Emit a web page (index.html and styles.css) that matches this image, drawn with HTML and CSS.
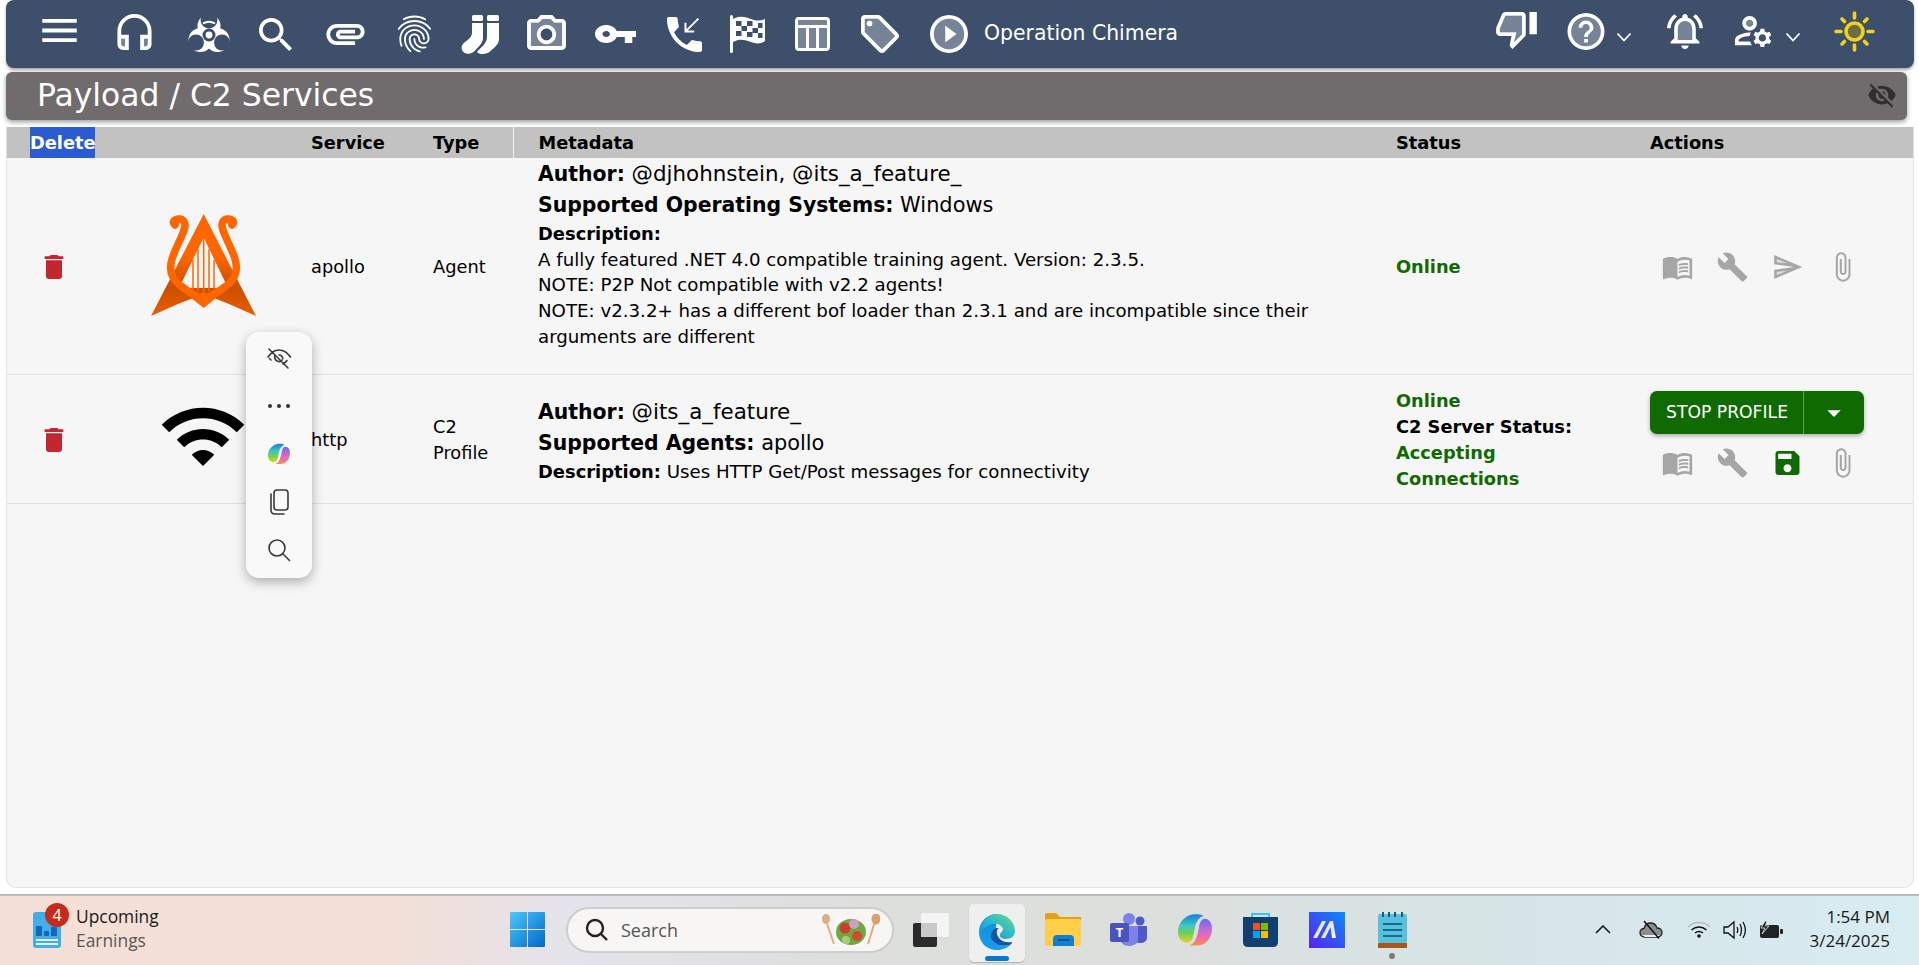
FILE: index.html
```html
<!DOCTYPE html>
<html lang="en">
<head>
<meta charset="utf-8">
<title>Payload / C2 Services</title>
<link rel="stylesheet" href="styles.css">
</head>
<body>
<header class="topbar">
  <svg class="ic up4 m0" width="35" height="23" viewBox="3 6 18 12"><path d="M3 18h18v-2H3v2zm0-5h18v-2H3v2zm0-7v2h18V6H3z"/></svg>
  <svg class="ic up2 m40" width="35" height="36" viewBox="3 1 18 19"><path opacity=".3" d="M5 14h2v4H5zM17 14h2v4h-2z"/><path d="M19 14v3c0 .55-.45 1-1 1h-1v-4h2M7 14v4H6c-.55 0-1-.45-1-1v-3h2m5-13c-4.97 0-9 4.03-9 9v7c0 1.66 1.34 3 3 3h3v-8H5v-2c0-3.87 3.13-7 7-7s7 3.13 7 7v2h-4v8h3c1.66 0 3-1.34 3-3v-7c0-4.97-4.03-9-9-9z"/></svg>
  <svg class="ic m35" width="43" height="39" viewBox="0 0 43 39"><defs><mask id="bio"><rect width="43" height="39" fill="#000"/><circle cx="22" cy="11" r="11.500" fill="#fff"/><circle cx="13.500" cy="25" r="12" fill="#fff"/><circle cx="30.500" cy="25" r="12" fill="#fff"/><circle cx="22" cy="5" r="8.500" fill="#000"/><circle cx="9" cy="27.500" r="8" fill="#000"/><circle cx="35" cy="27.500" r="8" fill="#000"/><circle cx="22" cy="20" r="6.500" fill="#000"/></mask></defs><rect width="43" height="39" mask="url(#bio)"/><circle cx="22" cy="20" r="3.400"/><path d="M16 8.500Q22 5 28 8.500" class="bio-arc"/></svg>
  <svg class="ic m29" width="33" height="33" viewBox="3 3 17.5 17.5"><path d="M15.5 14h-.79l-.28-.27C15.41 12.59 16 11.11 16 9.5 16 5.91 13.09 3 9.5 3S3 5.91 3 9.5 5.91 16 9.5 16c1.61 0 3.09-.59 4.23-1.57l.27.28v.79l5 4.99L20.49 19l-4.99-5zm-6 0C7.01 14 5 11.99 5 9.5S7.01 5 9.5 5 14 7.01 14 9.5 11.99 14 9.5 14z"/></svg>
  <svg class="ic m34" width="39" height="21" viewBox="2 7 20 11"><path d="M2 12.5C2 9.46 4.46 7 7.5 7H18c2.21 0 4 1.79 4 4s-1.79 4-4 4H9.5C8.12 15 7 13.88 7 12.5S8.12 10 9.5 10H17v2H9.41c-.55 0-.55 1 0 1H18c1.1 0 2-.9 2-2s-.9-2-2-2H7.5C5.57 9 4 10.57 4 12.5S5.57 16 7.5 16H17v2H7.5C4.46 18 2 15.54 2 12.5z"/></svg>
  <svg class="ic m32" width="34" height="38" viewBox="2.5 2 18.5 20"><path d="M17.81 4.47c-.08 0-.16-.02-.23-.06C15.66 3.42 14 3 12.01 3c-1.98 0-3.86.47-5.57 1.41-.24.13-.54.04-.68-.2-.13-.24-.04-.55.2-.68C7.82 2.52 9.86 2 12.01 2c2.13 0 3.99.47 6.03 1.52.25.13.34.43.21.67-.09.18-.26.28-.44.28zM3.5 9.72c-.1 0-.2-.03-.29-.09-.23-.16-.28-.47-.12-.7.99-1.4 2.25-2.5 3.75-3.27C9.98 4.04 14 4.03 17.15 5.65c1.5.77 2.76 1.86 3.75 3.25.16.22.11.54-.12.7-.23.16-.54.11-.7-.12-.9-1.26-2.04-2.25-3.39-2.94-2.87-1.47-6.54-1.47-9.4.01-1.36.7-2.5 1.7-3.4 2.96-.08.14-.23.21-.39.21zm6.25 12.07c-.13 0-.26-.05-.35-.15-.87-.87-1.34-1.43-2.01-2.64-.69-1.23-1.05-2.73-1.05-4.34 0-2.97 2.54-5.39 5.66-5.39s5.66 2.42 5.66 5.39c0 .28-.22.5-.5.5s-.5-.22-.5-.5c0-2.42-2.09-4.39-4.66-4.39s-4.66 1.97-4.66 4.39c0 1.44.32 2.77.93 3.85.64 1.15 1.08 1.64 1.85 2.42.19.2.19.51 0 .71-.11.1-.24.15-.37.15zm7.17-1.85c-1.19 0-2.24-.3-3.1-.89-1.49-1.01-2.38-2.65-2.38-4.39 0-.28.22-.5.5-.5s.5.22.5.5c0 1.41.72 2.74 1.94 3.56.71.48 1.54.71 2.54.71.24 0 .64-.03 1.04-.1.27-.05.53.13.58.41.05.27-.13.53-.41.58-.57.11-1.07.12-1.21.12zM14.91 22c-.04 0-.09-.01-.13-.02-1.59-.44-2.63-1.03-3.72-2.1-1.4-1.39-2.17-3.24-2.17-5.22 0-1.62 1.38-2.94 3.08-2.94s3.08 1.32 3.08 2.94c0 1.07.93 1.94 2.08 1.94s2.08-.87 2.08-1.94c0-3.77-3.25-6.83-7.25-6.83-2.84 0-5.44 1.58-6.61 4.03-.39.81-.59 1.76-.59 2.8 0 .78.07 2.01.67 3.61.1.26-.03.55-.29.64-.26.1-.55-.04-.64-.29-.49-1.31-.73-2.61-.73-3.96 0-1.2.23-2.29.68-3.24 1.33-2.79 4.28-4.6 7.51-4.6 4.55 0 8.25 3.51 8.25 7.83 0 1.62-1.38 2.94-3.08 2.94s-3.08-1.32-3.08-2.94c0-1.07-.93-1.94-2.08-1.94s-2.08.87-2.08 1.94c0 1.71.66 3.31 1.87 4.51.95.94 1.86 1.46 3.27 1.85.27.07.42.35.35.61-.05.23-.26.38-.47.38z"/></svg>
  <svg class="ic m30" width="39" height="39" viewBox="0 0 39 39"><rect x="11" y="0" width="11" height="6" rx="1.5"/><rect x="26" y="0" width="12" height="6" rx="1.5"/><path d="M11 8H22V23C22 28 18 31 15 34.500C11 40 3 40 1 35C-.5 30 3 28 6 25.500C9 23 11 21 11 18Z"/><path d="M26 8H38V24C38 29 34 32 30 35.500C26 40 18 40 16 37C19 33 26 29 26 22Z"/></svg>
  <svg class="ic up2 m27" width="39" height="35" viewBox="2 2 20 18"><path opacity=".3" d="M20 6h-4.050l-1.830-2H9.880L8.050 6H4v12h16V6zm-8 11c-2.760 0-5-2.240-5-5s2.240-5 5-5 5 2.240 5 5-2.240 5-5 5z"/><path d="M14.120 4l1.830 2H20v12H4V6h4.050l1.830-2h4.240M15 2H9L7.170 4H4c-1.100 0-2 .9-2 2v12c0 1.100.9 2 2 2h16c1.100 0 2-.9 2-2V6c0-1.100-.9-2-2-2h-3.170L15 2zm-3 7c1.650 0 3 1.350 3 3s-1.350 3-3 3-3-1.350-3-3 1.350-3 3-3m0-2c-2.760 0-5 2.240-5 5s2.240 5 5 5 5-2.240 5-5-2.240-5-5-5z"/></svg>
  <svg class="ic m29" width="41" height="18" viewBox="1 6 22 12" preserveAspectRatio="none"><path d="M12.650 10C11.830 7.670 9.610 6 7 6c-3.310 0-6 2.690-6 6s2.690 6 6 6c2.610 0 4.830-1.670 5.650-4H17v4h4v-4h2v-4H12.650zM7 14c-1.100 0-2-.9-2-2s.9-2 2-2 2 .9 2 2-.9 2-2 2z"/></svg>
  <svg class="ic m31" width="35" height="35" viewBox="3 3 18 18"><path d="M20 15.500c-1.250 0-2.450-.2-3.570-.57-.35-.11-.74-.03-1.020.24l-2.200 2.200c-2.830-1.440-5.150-3.750-6.590-6.590l2.200-2.210c.28-.26.36-.65.25-1C8.700 6.450 8.500 5.250 8.500 4c0-.55-.45-1-1-1H4c-.55 0-1 .45-1 1 0 9.390 7.610 17 17 17 .55 0 1-.45 1-1v-3.500c0-.55-.45-1-1-1zM19.500 4.200L18.800 3.500 13 9.300V6h-1v5h5v-1h-3.300z"/></svg>
  <svg class="ic m28" width="35" height="38" viewBox="0 0 35 38"><defs><clipPath id="flagclip"><path d="M3 4C10 0 16 2 21 4C26 6 31 6 35 4V26C31 29 26 29 21 27C16 25 10 23 3 27Z"/></clipPath></defs><rect width="3" height="38" rx="1.500"/><path d="M3 4C10 0 16 2 21 4C26 6 31 6 35 4V26C31 29 26 29 21 27C16 25 10 23 3 27Z"/><g clip-path="url(#flagclip)" class="check"><rect x="6" y="6" width="5.500" height="5"/><rect x="17" y="6" width="5.500" height="5"/><rect x="28" y="8" width="4.500" height="5"/><rect x="11.500" y="11" width="5.500" height="5"/><rect x="22.500" y="13" width="5.500" height="5"/><rect x="6" y="16" width="5.500" height="5"/><rect x="17" y="17" width="5.500" height="5"/><rect x="28" y="18" width="4.500" height="5"/></g></svg>
  <svg class="ic m30" width="35" height="34" viewBox="0 0 35 34"><rect x="1.500" y="1.500" width="32" height="31" rx="2.500" class="tone"/><rect x="1.500" y="1.500" width="32" height="31" rx="2.500" class="line"/><path d="M2 9.500H33M12.500 9.500V32M22.500 9.500V32" class="line"/></svg>
  <svg class="ic m31" width="38" height="38" viewBox="2 2 20 20"><path opacity=".3" d="M11 4H4v7l9 9.010L20 13l-9-9zM6.500 8C5.670 8 5 7.330 5 6.500S5.670 5 6.500 5 8 5.670 8 6.500 7.330 8 6.500 8z"/><path d="M21.410 11.580l-9-9C12.050 2.220 11.550 2 11 2H4c-1.100 0-2 .9-2 2v7c0 .55.22 1.050.59 1.420l9 9c.36.36.86.58 1.410.58s1.050-.22 1.410-.59l7-7c.37-.36.59-.86.59-1.410s-.23-1.060-.59-1.420zM13 20.010L4 11V4h7v-.01l9 9-7 7.020z"/><circle cx="6.500" cy="6.500" r="1.500"/></svg>
  <svg class="ic m31" width="38" height="38" viewBox="2 2 20 20"><path opacity=".3" d="M12 20c4.410 0 8-3.590 8-8s-3.590-8-8-8-8 3.590-8 8 3.590 8 8 8zM10 7.500l6 4.500-6 4.500v-9z"/><path d="M12 22c5.520 0 10-4.480 10-10S17.520 2 12 2 2 6.480 2 12s4.480 10 10 10zm0-18c4.410 0 8 3.590 8 8s-3.590 8-8 8-8-3.590-8-8 3.590-8 8-8zm-2 3.500v9l6-4.500z"/></svg>
  <span class="op-name">Operation Chimera</span>
  <svg class="ic up4 right-start" width="41" height="37" viewBox="1 3 22 20"><path opacity=".3" d="M3 12v2h9l-1.340 5.340L15 15V5H6z"/><path d="M15 3H6c-.83 0-1.540.5-1.840 1.220l-3.020 7.050c-.09.23-.14.47-.14.730v2c0 1.100.9 2 2 2h6.310l-.95 4.570-.03.32c0 .41.17.79.44 1.060L9.830 23l6.590-6.590c.36-.36.58-.86.58-1.410V5c0-1.100-.9-2-2-2zm0 12l-4.340 4.340L12 14H3v-2l3-7h9v10zm4-12h4v12h-4z"/></svg>
  <svg class="ic up6 m30" width="38" height="37" viewBox="2 2 20 20"><circle cx="12" cy="12" r="8" opacity=".3"/><path d="M11 18h2v-2h-2v2zm1-16C6.480 2 2 6.480 2 12s4.480 10 10 10 10-4.480 10-10S17.520 2 12 2zm0 18c-4.410 0-8-3.590-8-8s3.590-8 8-8 8 3.590 8 8-3.590 8-8 8zm0-14c-2.210 0-4 1.790-4 4h2c0-1.100.9-2 2-2s2 .9 2 2c0 2-3 1.750-3 5h2c0-2.250 3-2.500 3-5 0-2.210-1.790-4-4-4z"/></svg>
  <svg class="chev m11" width="16" height="10" viewBox="0 0 16 10"><path d="M1.500 1.500L8 8.500l6.500-7"/></svg>
  <svg class="ic up6 m34" width="38" height="36" viewBox="2 2 20 20"><path opacity=".3" d="M12 6.500c-2.490 0-4 2.020-4 4.500v6h8v-6c0-2.480-1.510-4.500-4-4.500z"/><path d="M12 22c1.100 0 2-.9 2-2h-4c0 1.100.9 2 2 2zm6-6v-5c0-3.070-1.630-5.640-4.500-6.320V4c0-.83-.67-1.500-1.500-1.500s-1.500.67-1.500 1.500v.68C7.640 5.360 6 7.920 6 11v5l-2 2v1h16v-1l-2-2zm-2 1H8v-6c0-2.480 1.510-4.500 4-4.500s4 2.020 4 4.500v6zM7.580 4.080L6.150 2.650C3.750 4.480 2.170 7.300 2.030 10.500h2c.15-2.650 1.510-4.970 3.550-6.420zm12.390 6.420h2c-.15-3.200-1.730-6.020-4.120-7.850l-1.420 1.430c2.020 1.450 3.390 3.770 3.540 6.420z"/></svg>
  <svg class="ic up6 m31" width="38" height="33" viewBox="2 4 20.800 17"><circle cx="10" cy="8" r="3" opacity=".3"/><path d="M4 18v-.65c0-.34.16-.66.41-.81C6.100 15.530 8.030 15 10 15c.03 0 .05 0 .08.01.1-.7.3-1.370.59-1.980-.22-.02-.44-.03-.67-.03-2.420 0-4.680.67-6.610 1.820-.88.52-1.390 1.500-1.390 2.530V20h9.260c-.42-.6-.75-1.280-.97-2H4z"/><path d="M10 12c2.210 0 4-1.790 4-4s-1.790-4-4-4-4 1.790-4 4 1.790 4 4 4zm0-6c1.100 0 2 .9 2 2s-.9 2-2 2-2-.9-2-2 .9-2 2-2z"/><path d="M20.750 16c0-.22-.03-.42-.06-.63l1.140-1.010-1-1.730-1.450.49c-.32-.27-.68-.48-1.080-.63L18 11h-2l-.3 1.490c-.4.15-.76.36-1.080.63l-1.450-.49-1 1.730 1.140 1.010c-.03.21-.06.41-.06.63s.03.42.06.63l-1.140 1.010 1 1.730 1.450-.49c.32.27.68.48 1.080.63L16 21h2l.3-1.490c.4-.15.76-.36 1.080-.63l1.450.49 1-1.730-1.140-1.010c.03-.21.06-.41.06-.63zM17 18c-1.100 0-2-.9-2-2s.9-2 2-2 2 .9 2 2-.9 2-2 2z"/></svg>
  <svg class="chev m12" width="16" height="10" viewBox="0 0 16 10"><path d="M1.500 1.500L8 8.500l6.500-7"/></svg>
  <svg class="sun up6 m33" width="41" height="41" viewBox="0 0 41 41"><circle cx="20.500" cy="20.500" r="8.500" class="sun-core"/><path d="M20.500 2v5M20.500 34v5M2 20.500h5M34 20.500h5M8 8l2.500 2.500M30.500 30.500L33 33M33 8l-2.500 2.500M10.500 30.500L8 33" class="sun-rays"/></svg>
</header>

<section class="titlebar">
  <h1 class="page-title">Payload / C2 Services</h1>
  <svg class="eye-off" width="30" height="30" viewBox="0 0 24 24"><path d="M12 7c2.760 0 5 2.240 5 5 0 .65-.13 1.260-.36 1.830l2.920 2.920c1.510-1.260 2.700-2.890 3.430-4.750-1.730-4.390-6-7.500-11-7.500-1.400 0-2.740.25-3.980.7l2.160 2.160C10.740 7.130 11.350 7 12 7zM2 4.270l2.280 2.280.46.46C3.080 8.300 1.780 10.020 1 12c1.730 4.390 6 7.500 11 7.500 1.550 0 3.030-.3 4.380-.84l.42.42L19.730 22 21 20.730 3.270 3 2 4.270zM7.530 9.800l1.550 1.550c-.05.21-.08.43-.08.65 0 1.660 1.340 3 3 3 .22 0 .44-.03.65-.08l1.550 1.550c-.67.33-1.410.53-2.200.53-2.760 0-5-2.240-5-5 0-.79.2-1.530.53-2.200zm4.310-.78l3.150 3.150.02-.16c0-1.660-1.340-3-3-3l-.17.01z"/></svg>
</section>

<main class="panel">
  <table class="services">
    <colgroup>
      <col class="c-del"><col class="c-logo"><col class="c-svc"><col class="c-type"><col class="c-meta"><col class="c-status"><col class="c-act">
    </colgroup>
    <thead>
      <tr>
        <th class="th-del"><span class="selected">Delete</span></th>
        <th></th>
        <th>Service</th>
        <th class="th-type">Type</th>
        <th class="th-meta">Metadata</th>
        <th>Status</th>
        <th>Actions</th>
      </tr>
    </thead>
    <tbody>
      <tr class="row-agent">
        <td class="td-del"><svg class="trash" width="32" height="32" viewBox="0 0 24 24"><path d="M6 19c0 1.100.9 2 2 2h8c1.100 0 2-.9 2-2V7H6v12zM19 4h-3.500l-1-1h-5l-1 1H5v2h14V4z"/></svg></td>
        <td class="td-logo">
          <svg class="logo" width="105" height="103" viewBox="0 0 105 103">
            <defs><linearGradient id="lyreg" x1="0" y1="0" x2="0" y2="1"><stop offset=".4" stop-color="#ff6600"/><stop offset=".72" stop-color="#c94f00"/><stop offset="1" stop-color="#ea5e00"/></linearGradient></defs>
            <path fill="url(#lyreg)" fill-rule="evenodd" d="M52.700 0L105 102 78 90 52.700 80 27 90 0 102ZM52.700 23.500L28 74H77Z"/>
            <path d="M42 46V75M47 35V77M52.700 23.500V79M58 35V77M63 46V75" class="strings"/>
            <path d="M24 11C20 8 24 4.500 29 5C34 6 35 11 33 16C31 23 24 35 21 45C18 55 20 65 30 72C36 77 45 82 52.700 86C60 82 69 77 75 72C85 65 87 55 84 45C81 35 74 23 72 16C70 11 71 6 76 5C81 4.500 85 8 81 11" class="lyre"/>
            <path d="M40 84L52.700 94 65 84 52.700 78Z" class="lyre-tip"/>
            <circle cx="24.500" cy="7.500" r="4.600" class="lyre-tip"/><circle cx="80.500" cy="7.500" r="4.600" class="lyre-tip"/>
          </svg>
        </td>
        <td>apollo</td>
        <td>Agent</td>
        <td class="td-meta">
          <div class="meta-lg meta-author"><b>Author:</b> @djhohnstein, @its_a_feature_</div>
          <div class="meta-lg"><b>Supported Operating Systems:</b> Windows</div>
          <div class="meta-sm"><b>Description:</b></div>
          <div class="meta-sm">A fully featured .NET 4.0 compatible training agent. Version: 2.3.5.</div>
          <div class="meta-sm">NOTE: P2P Not compatible with v2.2 agents!</div>
          <div class="meta-sm">NOTE: v2.3.2+ has a different bof loader than 2.3.1 and are incompatible since their arguments are different</div>
        </td>
        <td><b class="ok">Online</b></td>
        <td>
          <div class="actions">
            <svg class="act" width="32" height="32" viewBox="0 0 24 24"><path d="M21 5c-1.110-.35-2.330-.5-3.500-.5-1.950 0-4.050.4-5.500 1.500-1.450-1.100-3.550-1.500-5.500-1.500S2.450 4.900 1 6v14.650c0 .25.25.5.5.5.1 0 .15-.05.25-.05C3.100 20.450 5.050 20 6.500 20c1.950 0 4.050.4 5.500 1.500 1.350-.85 3.800-1.500 5.500-1.500 1.650 0 3.350.3 4.750 1.050.1.05.15.05.25.05.25 0 .5-.25.5-.5V6c-.6-.45-1.250-.75-2-1zm0 13.500c-1.100-.35-2.300-.5-3.500-.5-1.700 0-4.150.65-5.500 1.500V8c1.350-.85 3.800-1.500 5.500-1.500 1.200 0 2.400.15 3.500.5v11.500z"/><path d="M17.500 10.500c.88 0 1.730.09 2.500.26V9.240c-.79-.15-1.640-.24-2.500-.24-1.700 0-3.240.29-4.500.83v1.660c1.130-.64 2.700-.99 4.500-.99zM13 12.490v1.660c1.130-.64 2.700-.99 4.500-.99.88 0 1.730.09 2.500.26V11.900c-.79-.15-1.640-.24-2.500-.24-1.700 0-3.240.3-4.500.83zM17.500 14.330c-1.700 0-3.240.29-4.500.83v1.660c1.130-.64 2.700-.99 4.500-.99.88 0 1.730.09 2.500.26v-1.520c-.79-.16-1.640-.24-2.500-.24z"/></svg>
            <svg class="act" width="32" height="32" viewBox="0 0 24 24"><path d="M22.700 19l-9.100-9.100c.9-2.300.4-5-1.500-6.900-2-2-5-2.400-7.400-1.300L9 6 6 9 1.600 4.700C.4 7.100.9 10.100 2.900 12.100c1.900 1.900 4.600 2.400 6.900 1.500l9.100 9.100c.4.4 1 .4 1.400 0l2.300-2.300c.5-.4.5-1.100.1-1.400z"/></svg>
            <svg class="act" width="32" height="32" viewBox="0 0 24 24"><path opacity=".3" d="M4 8.250l7.510 1-7.500-3.220zm.01 9.720l7.500-3.220-7.510 1z"/><path d="M2.010 3L2 10l15 2-15 2 .01 7L23 12 2.010 3zM4 8.250V6.030l7.510 3.220-7.510-1zm.01 9.720v-2.220l7.510-1-7.510 3.220z"/></svg>
            <svg class="act" width="32" height="32" viewBox="0 0 24 24"><path d="M16.500 6v11.500c0 2.210-1.790 4-4 4s-4-1.790-4-4V5c0-1.380 1.120-2.500 2.500-2.500s2.500 1.120 2.500 2.500v10.500c0 .55-.45 1-1 1s-1-.45-1-1V6H10v9.500c0 1.380 1.120 2.500 2.500 2.500s2.500-1.120 2.500-2.500V5c0-2.210-1.790-4-4-4S7 2.790 7 5v12.500c0 3.040 2.460 5.500 5.500 5.500s5.500-2.460 5.500-5.500V6h-1.500z"/></svg>
          </div>
        </td>
      </tr>
      <tr class="row-c2">
        <td class="td-del"><svg class="trash" width="32" height="32" viewBox="0 0 24 24"><path d="M6 19c0 1.100.9 2 2 2h8c1.100 0 2-.9 2-2V7H6v12zM19 4h-3.500l-1-1h-5l-1 1H5v2h14V4z"/></svg></td>
        <td class="td-logo"><svg class="logo wifi" width="90" height="90" viewBox="0 0 24 24"><path d="M1 9l2 2c4.970-4.970 13.030-4.970 18 0l2-2C16.930 2.930 7.080 2.930 1 9zm8 8l3 3 3-3c-1.650-1.660-4.340-1.660-6 0zm-4-4l2 2c2.760-2.760 7.240-2.760 10 0l2-2C15.140 9.140 8.870 9.140 5 13z"/></svg></td>
        <td>http</td>
        <td>C2 Profile</td>
        <td class="td-meta">
          <div class="meta-lg meta-author"><b>Author:</b> @its_a_feature_</div>
          <div class="meta-lg"><b>Supported Agents:</b> apollo</div>
          <div class="meta-sm"><b>Description:</b> Uses HTTP Get/Post messages for connectivity</div>
        </td>
        <td class="td-status">
          <b class="ok">Online</b><br><b>C2 Server Status:</b><br><b class="ok">Accepting Connections</b>
        </td>
        <td class="td-actions">
          <div class="btn-group"><span class="btn-main">STOP PROFILE</span><span class="btn-drop"><svg width="32" height="32" viewBox="0 0 24 24"><path d="M7 10l5 5 5-5z"/></svg></span></div>
          <div class="actions actions-under">
            <svg class="act" width="32" height="32" viewBox="0 0 24 24"><path d="M21 5c-1.110-.35-2.330-.5-3.500-.5-1.950 0-4.050.4-5.500 1.500-1.450-1.100-3.550-1.500-5.500-1.500S2.450 4.900 1 6v14.650c0 .25.25.5.5.5.1 0 .15-.05.25-.05C3.100 20.450 5.050 20 6.500 20c1.950 0 4.050.4 5.500 1.500 1.350-.85 3.800-1.500 5.500-1.500 1.650 0 3.350.3 4.750 1.050.1.05.15.05.25.05.25 0 .5-.25.5-.5V6c-.6-.45-1.250-.75-2-1zm0 13.500c-1.100-.35-2.300-.5-3.500-.5-1.700 0-4.150.65-5.500 1.500V8c1.350-.85 3.800-1.500 5.500-1.500 1.200 0 2.400.15 3.500.5v11.500z"/><path d="M17.500 10.500c.88 0 1.730.09 2.500.26V9.240c-.79-.15-1.640-.24-2.500-.24-1.700 0-3.240.29-4.500.83v1.660c1.130-.64 2.700-.99 4.500-.99zM13 12.490v1.660c1.130-.64 2.700-.99 4.500-.99.88 0 1.730.09 2.500.26V11.900c-.79-.15-1.640-.24-2.500-.24-1.700 0-3.240.3-4.500.83zM17.500 14.330c-1.700 0-3.240.29-4.500.83v1.660c1.130-.64 2.700-.99 4.500-.99.88 0 1.730.09 2.500.26v-1.520c-.79-.16-1.640-.24-2.500-.24z"/></svg>
            <svg class="act" width="32" height="32" viewBox="0 0 24 24"><path d="M22.700 19l-9.100-9.100c.9-2.300.4-5-1.500-6.900-2-2-5-2.400-7.400-1.300L9 6 6 9 1.600 4.700C.4 7.100.9 10.100 2.900 12.100c1.900 1.900 4.600 2.400 6.900 1.500l9.100 9.100c.4.4 1 .4 1.400 0l2.300-2.300c.5-.4.5-1.100.1-1.400z"/></svg>
            <svg class="act act-save" width="32" height="32" viewBox="0 0 24 24"><path d="M17 3H5c-1.110 0-2 .9-2 2v14c0 1.100.89 2 2 2h14c1.100 0 2-.9 2-2V7l-4-4zm-5 16c-1.660 0-3-1.340-3-3s1.340-3 3-3 3 1.340 3 3-1.340 3-3 3zm3-10H5V5h10v4z"/></svg>
            <svg class="act" width="32" height="32" viewBox="0 0 24 24"><path d="M16.500 6v11.500c0 2.210-1.790 4-4 4s-4-1.790-4-4V5c0-1.380 1.120-2.500 2.500-2.500s2.500 1.120 2.500 2.500v10.500c0 .55-.45 1-1 1s-1-.45-1-1V6H10v9.500c0 1.380 1.120 2.500 2.500 2.500s2.500-1.120 2.500-2.500V5c0-2.210-1.790-4-4-4S7 2.790 7 5v12.500c0 3.040 2.460 5.500 5.500 5.500s5.500-2.460 5.500-5.500V6h-1.500z"/></svg>
          </div>
        </td>
      </tr>
    </tbody>
  </table>
</main>

<aside class="mini-menu">
  <svg class="mini" width="26" height="24" viewBox="0 0 26 24"><path d="M2 11C6 5 10 4 13 4C17 4 21 6 24.500 11M5 14C4.500 13.500 4 13 3.500 12.500M21 14.500C20 16 18.500 17 17 18M9 9C8 11 9 14 11 15C13 16 15 15.500 16 14M13 9C15 9 17 11 16.700 12.500M3 3L22 22"/></svg>
  <div class="dots"><i></i><i></i><i></i></div>
  <svg width="24" height="22" viewBox="0 0 24 24"><defs><linearGradient id="mc1" x1="0" y1="0" x2="0" y2="1"><stop offset="0" stop-color="#1a7ce8"/><stop offset=".4" stop-color="#3cc8c0"/><stop offset=".7" stop-color="#7ad04a"/><stop offset="1" stop-color="#f0d030"/></linearGradient><linearGradient id="mc2" x1="0" y1="0" x2="0" y2="1"><stop offset="0" stop-color="#6a6cf0"/><stop offset=".45" stop-color="#c86ad8"/><stop offset=".75" stop-color="#f5709a"/><stop offset="1" stop-color="#ff9040"/></linearGradient></defs><path fill="url(#mc1)" d="M10 1C13 .5 17 1 18 2C15 3 13 6 12 10L10.500 17C10 20 8 21 6 21C3 21 0 18 0 13C0 7 5 2 10 1Z"/><path fill="url(#mc2)" d="M14 23H8C11 22 13 19 14 14L15 9C15.500 6 17 4 19 4C22 4 24 7 24 11C24 17 20 23 14 23Z"/></svg>
  <svg class="mini" width="20" height="26" viewBox="0 0 20 26"><rect x="5" y="1" width="14" height="20" rx="3"/><path d="M2 5V21C2 23.500 3.500 25 6 25H15"/></svg>
  <svg class="mini" width="24" height="24" viewBox="0 0 24 24"><circle cx="10" cy="10" r="8"/><path d="M16 16L22.500 22.500"/></svg>
</aside>

<footer class="taskbar">
  <div class="widget">
    <div class="widget-icon">
      <svg width="28" height="36" viewBox="0 0 28 36"><rect width="28" height="36" rx="3" fill="#41aeea"/><rect x="3" y="14" width="6" height="10" rx="1" fill="#1565b8"/><rect x="11" y="19" width="5" height="5" rx="1" fill="#1565b8"/><rect x="18" y="15" width="6" height="9" rx="1" fill="#1565b8"/><rect x="3" y="27" width="22" height="2" fill="#e8f6fd"/><rect x="3" y="31" width="22" height="2" fill="#e8f6fd"/></svg>
      <span class="badge">4</span>
    </div>
    <div class="widget-text"><div class="w1">Upcoming</div><div class="w2">Earnings</div></div>
  </div>
  <svg class="winlogo" width="35" height="35" viewBox="0 0 35 35"><defs><linearGradient id="win" x1="0" y1="0" x2="1" y2="1"><stop offset="0" stop-color="#4cc8fb"/><stop offset="1" stop-color="#0068c8"/></linearGradient></defs><path fill="url(#win)" d="M1 0H17V17H0V1Q0 0 1 0ZM18 0H34Q35 0 35 1V17H18ZM0 18H17V35H1Q0 35 0 34ZM18 18H35V34Q35 35 34 35H18Z"/></svg>
  <div class="search-pill">
    <svg class="pill-ic" width="24" height="24" viewBox="0 0 24 24"><circle cx="10" cy="10" r="8"/><path d="M16 16L22 22"/></svg>
    <span class="pill-text">Search</span>
    <svg class="salad" width="58" height="32" viewBox="0 0 58 32"><path d="M3 4L12 30" class="spoon"/><ellipse cx="4" cy="5" rx="4" ry="5" fill="#dcae84"/><path d="M54 4L46 30" class="spoon"/><ellipse cx="54" cy="5" rx="4.500" ry="5.500" fill="#d9a273"/><ellipse cx="29" cy="18" rx="15" ry="13" fill="#6fa83f"/><circle cx="23" cy="14" r="5.500" fill="#c94030"/><circle cx="35" cy="22" r="5" fill="#d04a30"/><circle cx="32" cy="10" r="5" fill="#c9a0c8"/><circle cx="24" cy="26" r="4" fill="#a8cc78"/></svg>
  </div>
  <svg class="tb taskview" width="36" height="34" viewBox="0 0 36 34"><rect x="0" y="10" width="24" height="24" rx="2" fill="#2b2b2b"/><rect x="8" y="0" width="28" height="24" rx="1.500" fill="#f4f4f4"/><rect x="8" y="10" width="16" height="14" fill="#c9c9c9"/></svg>
  <div class="tile">
    <svg width="36" height="36" viewBox="0 0 36 36"><defs><linearGradient id="edge1" x1="0" y1="0" x2="0" y2="1"><stop offset="0" stop-color="#0c8fd8"/><stop offset="1" stop-color="#1a9cf0"/></linearGradient><linearGradient id="edge2" x1="0" y1="1" x2="1" y2="0"><stop offset=".2" stop-color="#1e9ed8"/><stop offset=".6" stop-color="#35c1c1"/><stop offset="1" stop-color="#74dc72"/></linearGradient></defs><path fill="url(#edge1)" d="M18 0C8 0 0 8 0 18C0 29 8 36 18 36C24 36 29 33.500 32.500 30C27 32 21 33 16 29C11 25 12 17 17 14Z"/><path fill="url(#edge2)" d="M18 0C28 0 36 8 36 17C36 22 32 25 27 25C23 25 20 23 21 20C22 18 24 17 24 15C23 11 18 9 14 10C9 11 3 15 1 20C0 10 8 0 18 0Z"/><path fill="#0c56a4" d="M17 14C11 17 10 25 16 29C21 33 27 32 32.500 30L33 28C28 29 23 28 20 24C17 20 17 16 20 14Z"/></svg>
    <span class="tile-bar"></span>
  </div>
  <svg class="tb explorer" width="36" height="33" viewBox="0 0 36 33"><path fill="#e1a315" d="M0 2Q0 0 2 0H11L15 4H36V14H0Z"/><rect y="6" width="36" height="27" rx="2" fill="#ffcf49"/><path fill="#0f7fd0" d="M8 26Q8 22 12 22H25Q29 22 29 26V33H8Z"/><rect x="13" y="26" width="11" height="2" fill="#0a4f94"/></svg>
  <svg class="tb teams" width="37" height="33" viewBox="0 0 37 33"><circle cx="19" cy="6" r="6" fill="#7b83eb"/><circle cx="30" cy="8" r="4.500" fill="#5059c9"/><path fill="#5059c9" d="M23 13H37V24C37 28 34 30 30 30C27 30 24 29 23 27Z"/><path fill="#7b83eb" d="M10 13H28V26C28 31 23 33 19 33C14 33 10 30 10 25Z"/><rect y="10" width="19" height="19" rx="2" fill="#4b53bc"/><text x="9.500" y="24" class="teams-t">T</text></svg>
  <svg class="tb copilot" width="36" height="34" viewBox="0 0 24 24"><path fill="url(#mc1)" d="M10 1C13 .5 17 1 18 2C15 3 13 6 12 10L10.500 17C10 20 8 21 6 21C3 21 0 18 0 13C0 7 5 2 10 1Z"/><path fill="url(#mc2)" d="M14 23H8C11 22 13 19 14 14L15 9C15.500 6 17 4 19 4C22 4 24 7 24 11C24 17 20 23 14 23Z"/></svg>
  <svg class="tb store" width="35" height="35" viewBox="0 0 35 35"><path d="M9 6V2H26V6" fill="none" stroke="#36c5ee" stroke-width="2"/><path fill="#123f70" d="M0 5H35V30Q35 35 30 35H5Q0 35 0 30Z"/><rect x="10" y="11" width="7" height="7" fill="#f25022"/><rect x="18" y="11" width="7" height="7" fill="#7fba00"/><rect x="10" y="19" width="7" height="7" fill="#00a4ef"/><rect x="18" y="19" width="7" height="7" fill="#ffb900"/></svg>
  <svg class="tb mapp" width="36" height="36" viewBox="0 0 36 36"><defs><linearGradient id="mg" x1="0" y1="1" x2="1" y2="0"><stop offset="0" stop-color="#5a20f0"/><stop offset="1" stop-color="#0a8cf8"/></linearGradient></defs><rect width="36" height="36" fill="url(#mg)"/><path fill="#e8e8f8" d="M4 26L13 9H17L8 26ZM12 26L21 9H24L27 26H23L21.500 15 16 26Z"/><rect x="23" y="22" width="3" height="4" fill="#fff"/></svg>
  <div class="tb-note">
    <svg width="29" height="36" viewBox="0 0 29 36"><rect y="2" width="29" height="29" rx="2" fill="#58bfdc"/><rect x="4" y="0" width="2" height="5" fill="#0d5f7a"/><rect x="10" y="0" width="2" height="5" fill="#0d5f7a"/><rect x="16" y="0" width="2" height="5" fill="#0d5f7a"/><rect x="23" y="0" width="2" height="5" fill="#0d5f7a"/><rect x="5" y="11" width="19" height="2" fill="#0f6e8c"/><rect x="5" y="17" width="19" height="2" fill="#0f6e8c"/><rect x="5" y="23" width="19" height="2" fill="#0f6e8c"/><rect y="31" width="29" height="5" fill="#a8561b"/></svg>
    <span class="note-dot"></span>
  </div>
  <svg class="tb tray-chev" width="16" height="9" viewBox="0 0 16 9"><path d="M1 8L8 1l7 7"/></svg>
  <svg class="tb cloud" width="24" height="19" viewBox="0 0 24 19"><path d="M6 17C3 17 1 15 1 12.500C1 10 3 8.500 5 8.500C6 5 8.500 3 11.500 3C14.500 3 17 5 18 8C21 8 23 10 23 12.500C23 15 21 17 18 17Z" fill="#8d8d8d" stroke="#222" stroke-width="1.300"/><path d="M3 15L21 15 18 17H6Z" fill="#eee"/><path d="M5 1L20 18.500" stroke="#111" stroke-width="1.500"/></svg>
  <svg class="tb wifi-t" width="24" height="17" viewBox="0 0 24 17"><path d="M1 6C7 0 17 0 23 6" fill="none" stroke="#bbb" stroke-width="1.400"/><path d="M4.500 9C9 5 15 5 19.500 9M8 12C10.500 10 13.500 10 16 12" fill="none" stroke="#111" stroke-width="1.500"/><circle cx="12" cy="15" r="1.800" fill="#111"/></svg>
  <svg class="tb speaker" width="24" height="20" viewBox="0 0 24 20"><path d="M1 7H5L11 2V18L5 13H1Z" fill="none" stroke="#111" stroke-width="1.300"/><path d="M14 7C15 9 15 11 14 13M17 4C19 8 19 12 17 16M20 2C23 7 23 13 20 18" fill="none" stroke="#111" stroke-width="1.300"/></svg>
  <svg class="tb battery" width="24" height="18" viewBox="0 0 24 18"><rect x="1" y="4" width="19" height="13" rx="2" fill="#222"/><rect x="21" y="8" width="3" height="5" rx="1" fill="#222"/><path d="M6 0L2 7H6L3 13L10 5H6.500L8 0Z" fill="#222" stroke="#e8f2f4" stroke-width=".8"/></svg>
  <div class="clock"><div>1:54 PM</div><div>3/24/2025</div></div>
</footer>
</body>
</html>
```

FILE: styles.css
```css
* { box-sizing: border-box; }
html, body { margin: 0; height: 965px; overflow: hidden; }
body {
  position: relative;
  display: flex;
  flex-direction: column;
  width: 1919px;
  background: #fff;
  font-family: "DejaVu Sans", Verdana, sans-serif;
  color: #000;
}

/* top navigation */
.topbar {
  flex: none;
  height: 68px;
  margin: 0 5px 0 6px;
  padding: 0 39px 0 36px;
  display: flex;
  align-items: center;
  background: #3d4f6b;
  border-radius: 8px;
  box-shadow: 0 2px 3px rgba(0,0,0,.35);
}
.ic { flex: none; fill: #fff; }
.ic .tone { fill: #fff; fill-opacity: .3; }
.ic .line { fill: none; stroke: #fff; stroke-width: 3; }
.ic .check { fill: #3d4f6b; }
.ic .bio-arc { fill: none; stroke: #fff; stroke-width: 2; }
.up2 { margin-bottom: 4px; }
.up4 { margin-bottom: 7px; }
.up6 { margin-bottom: 6px; }
.m0 { margin-left: 0; }
.m11 { margin-left: 11px; }
.m12 { margin-left: 12px; }
.m27 { margin-left: 27px; }
.m28 { margin-left: 28px; }
.m29 { margin-left: 29px; }
.m30 { margin-left: 30px; }
.m31 { margin-left: 31px; }
.m32 { margin-left: 32px; }
.m33 { margin-left: 33px; }
.m34 { margin-left: 34px; }
.m35 { margin-left: 35px; }
.m40 { margin-left: 40px; }
.op-name {
  margin: 0 0 2px 16px;
  font-size: 20.4px;
  color: #fff;
  white-space: nowrap;
}
.right-start { margin-left: auto; }
.chev { flex: none; fill: none; stroke: #fff; stroke-width: 1.8; margin-top: 6px; }
.sun { flex: none; }
.sun-core { fill: #6d6d45; stroke: #f2d21a; stroke-width: 3.6; }
.sun-rays { fill: none; stroke: #f2d21a; stroke-width: 3.6; stroke-linecap: round; }

/* page title */
.titlebar {
  flex: none;
  height: 48px;
  margin: 4px 12px 0 6px;
  padding: 0 10px 2px 31px;
  display: flex;
  align-items: center;
  justify-content: space-between;
  background: #706b6c;
  border-radius: 6px;
  box-shadow: 0 2px 5px rgba(0,0,0,.4);
}
.page-title {
  margin: 0;
  font-size: 31.4px;
  font-weight: 400;
  color: #fff;
}
.eye-off { fill: #2f2f2f; }

/* services table */
.panel {
  flex: none;
  height: 761px;
  margin: 7px 5px 0 6px;
  background: #f6f6f6;
  border: 1px solid #e2e2e2;
  border-top: 0;
  border-radius: 0 0 10px 10px;
}
.services {
  width: 100%;
  table-layout: fixed;
  border-collapse: collapse;
  font-size: 17.8px;
  line-height: 26px;
}
.c-del { width: 98px; }
.c-logo { width: 196px; }
.c-svc { width: 122px; }
.c-type { width: 90px; }
.c-meta { width: 873px; }
.c-status { width: 254px; }
.c-act { width: 273px; }
.services th {
  height: 31px;
  padding: 0 0 0 10px;
  background: #c2c2c2;
  font-weight: 700;
  text-align: left;
}
.services .th-del { padding-left: 23px; }
.selected { display: block; width: 65px; height: 31px; line-height: 31px; background: #2a5bd0; color: #fff; }
.th-type { border-right: 1px solid #f0f0f0; }
.services .th-meta { padding-left: 25px; }
.services td {
  padding: 13px 0 11px 10px;
  vertical-align: middle;
  border-bottom: 1px solid #e0e0e0;
}
.services .td-del { padding: 2px 0 0 31px; }
.services .td-logo { padding: 0; text-align: center; }
.services .td-meta { padding: 4px 0 0 25px; }
.row-agent { height: 216px; }
.services .row-agent .td-meta { padding: 0 30px 24px 25px; }
.row-c2 { height: 128px; }
.services .td-status { padding-right: 30px; }
.services .td-actions { padding-bottom: 20px; }
.trash, .logo { display: block; }
.trash { fill: #c4262e; }
.logo { margin: 0 auto; }
.wifi { margin-top: -6px; }
.strings { fill: none; stroke: #ff6600; stroke-width: 1.5; }
.lyre { fill: none; stroke: #ff6600; stroke-width: 7.5; stroke-linecap: round; stroke-linejoin: round; }
.lyre-tip { fill: #ff6600; }
.meta-lg { font-size: 20.9px; line-height: 31px; }
.meta-author { font-size: 21.4px; }
.meta-lg b { font-size: 20.4px; }
.meta-sm { font-size: 18.2px; line-height: 25.7px; }
.meta-sm b { font-size: 17.9px; }
.ok { color: #0f6a02; }
.actions { display: flex; }
.act { flex: none; width: 55px; fill: #a6a6a6; }
.act-save { fill: #0f6a02; }
.actions-under { margin-top: 13px; }
.btn-group {
  display: flex;
  width: 214px;
  height: 43px;
  background: #0f6a02;
  border-radius: 7px;
  color: #fff;
  box-shadow: 0 2px 4px rgba(0,0,0,.3);
}
.btn-main {
  flex: 1;
  padding-left: 16px;
  line-height: 43px;
  font-size: 17.2px;
  border-right: 1px solid #5f9a56;
  white-space: nowrap;
}
.btn-drop { width: 60px; display: flex; align-items: center; justify-content: center; fill: #fff; }

/* selection mini menu */
.mini-menu {
  position: absolute;
  left: 246px;
  top: 332px;
  width: 66px;
  height: 246px;
  padding-top: 2px;
  display: grid;
  grid-auto-rows: 48px;
  place-items: center;
  background: #f9f9f9;
  border-radius: 13px;
  box-shadow: 0 4px 12px rgba(0,0,0,.3);
}
.mini { fill: none; stroke: #3a3a3a; stroke-width: 1.6; stroke-linecap: round; }
.dots { display: flex; gap: 5px; }
.dots i { width: 4px; height: 4px; border-radius: 50%; background: #333; }

/* taskbar */
.taskbar {
  flex: none;
  position: relative;
  height: 71px;
  margin-top: 6px;
  padding: 0 29px 2px 33px;
  display: flex;
  align-items: center;
  border-top: 2px solid #bdb9b9;
  background: linear-gradient(90deg, #f5e0d8 0%, #f3dfd6 20%, #e4e3ec 30%, #dcdfdc 45%, #dcdfdc 60%, #d6e5e8 80%, #d8ecf2 100%);
  font-family: "Open Sans", "Noto Sans", sans-serif;
}
.widget { width: 477px; display: flex; align-items: center; flex: none; }
.widget-icon { position: relative; width: 28px; height: 36px; }
.badge {
  position: absolute;
  left: 12px;
  top: -9px;
  width: 24px;
  height: 24px;
  border-radius: 50%;
  background: #c42b1c;
  color: #fff;
  font-size: 16px;
  line-height: 24px;
  text-align: center;
}
.widget-text { margin: 0 0 3px 15px; font-size: 17.4px; line-height: 24px; }
.w1 { color: #1a1a1a; }
.w2 { color: #5c5656; }
.winlogo { flex: none; }
.search-pill {
  flex: none;
  width: 328px;
  height: 46px;
  margin-left: 21px;
  padding: 0 12px 0 17px;
  display: flex;
  align-items: center;
  border: 2px solid #cfcdca;
  border-radius: 23px;
  background: #f7f6f4;
}
.pill-ic { fill: none; stroke: #222; stroke-width: 2.4; }
.pill-text { margin-left: 12px; font-size: 18px; color: #555; }
.salad { margin-left: auto; }
.spoon { stroke: #dcae84; stroke-width: 2; }
.tb { flex: none; }
.taskview { margin-left: 19px; }
.tile {
  position: relative;
  flex: none;
  width: 56px;
  height: 58px;
  margin: 6px 0 0 20px;
  padding-top: 10px;
  display: flex;
  justify-content: center;
  align-items: flex-start;
  background: #efefef;
  border-radius: 5px;
  box-shadow: 0 1px 1px rgba(0,0,0,.2);
}
.tile-bar {
  position: absolute;
  left: 16px;
  bottom: 1px;
  width: 24px;
  height: 5px;
  border-radius: 3px;
  background: #0078d4;
}
.explorer { margin-left: 20px; }
.teams { margin-left: 29px; }
.teams-t { font-size: 13px; font-weight: 700; fill: #fff; text-anchor: middle; }
.copilot { margin-left: 30px; }
.store { margin-left: 30px; }
.mapp { margin-left: 31px; }
.tb-note { position: relative; flex: none; width: 29px; height: 36px; margin-left: 33px; }
.note-dot {
  position: absolute;
  left: 11px;
  top: 41px;
  width: 6px;
  height: 6px;
  border-radius: 50%;
  background: #7a7a7a;
}
.tray-chev { margin-left: 188px; fill: none; stroke: #1a1a1a; stroke-width: 1.6; }
.cloud { margin-left: 28px; }
.wifi-t { margin-left: 24px; }
.speaker { margin-left: 12px; }
.battery { margin-left: 12px; }
.clock {
  margin: 0 0 2px auto;
  text-align: right;
  font-size: 17px;
  line-height: 24px;
  color: #1a1a1a;
}
```
